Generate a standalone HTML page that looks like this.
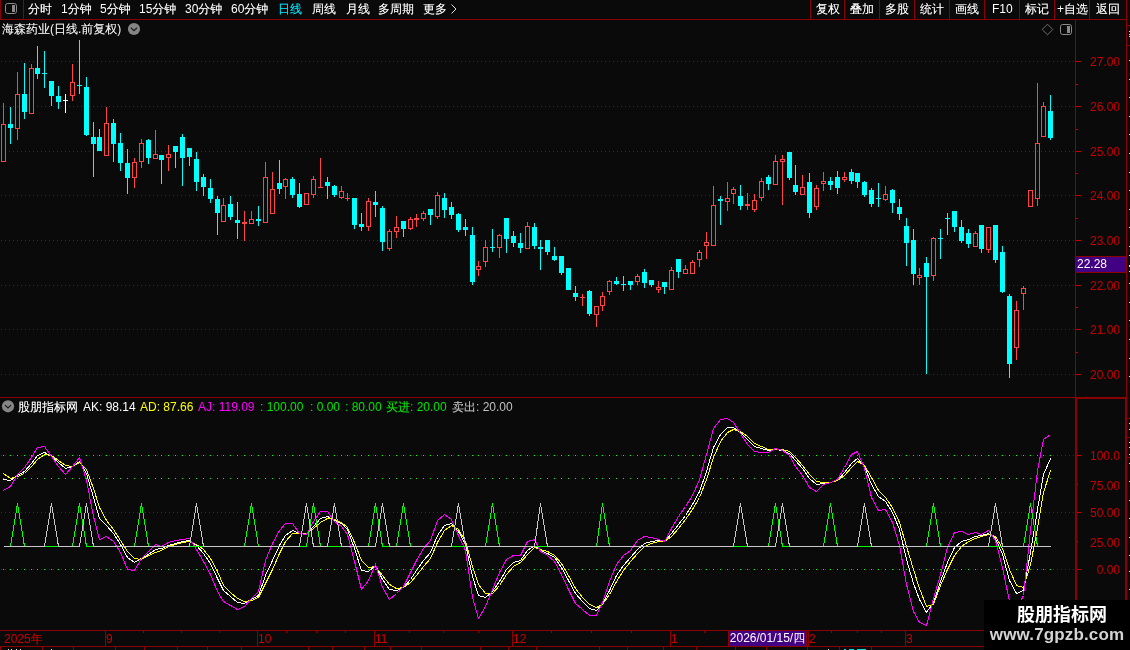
<!DOCTYPE html>
<html lang="zh-CN"><head><meta charset="utf-8"><title>海森药业 日线</title>
<style>
html,body{margin:0;padding:0;background:#0a0a0a;}
body{width:1130px;height:650px;overflow:hidden;position:relative;font-family:"Liberation Sans","WenQuanYi Zen Hei",sans-serif;font-size:12px;}
svg{position:absolute;left:0;top:0;}
.t{will-change:transform;text-shadow:0 0 0 color-mix(in srgb, currentColor 45%, transparent);position:absolute;white-space:nowrap;line-height:16px;height:16px;font-size:12px;}
.ns{text-shadow:none !important}
#wm{will-change:transform;position:absolute;left:984px;top:600px;width:146px;height:50px;background:#000;}
#wm .a{position:absolute;left:0;width:146px;text-align:center;top:3px;font-size:18px;line-height:24px;font-weight:bold;color:#fff;font-family:"Liberation Sans","Noto Sans CJK SC",sans-serif;text-indent:10px}
#wm .b{position:absolute;left:0;width:146px;text-align:center;top:25px;font-size:17px;line-height:20px;font-weight:bold;color:#d4d4d4;letter-spacing:0.14px;}
#datebox{will-change:transform;position:absolute;left:728px;top:631px;width:77px;height:15px;border-left:1px solid #8b0000;background:#420083;color:#fff;font-size:12px;line-height:15px;text-align:center;white-space:nowrap}
#pricebox{will-change:transform;position:absolute;left:1076px;top:256px;width:50px;height:15px;border-top:1px solid #8b0000;border-bottom:1px solid #8b0000;background:#420083;color:#fff;font-size:12px;line-height:15px;text-indent:1px}
</style></head><body>
<svg width="1130" height="650" viewBox="0 0 1130 650" shape-rendering="crispEdges">
<rect x="0" y="19" width="1127" height="1" fill="#8b0000"/>
<rect x="0" y="0" width="1" height="20" fill="#8b0000"/>
<rect x="23" y="0" width="1" height="20" fill="#8b0000"/>
<rect x="810" y="0" width="1" height="19" fill="#8b0000"/>
<rect x="844" y="0" width="1" height="19" fill="#8b0000"/>
<rect x="879" y="0" width="1" height="19" fill="#8b0000"/>
<rect x="914" y="0" width="1" height="19" fill="#8b0000"/>
<rect x="949" y="0" width="1" height="19" fill="#8b0000"/>
<rect x="984" y="0" width="1" height="19" fill="#8b0000"/>
<rect x="1019" y="0" width="1" height="19" fill="#8b0000"/>
<rect x="1054" y="0" width="1" height="19" fill="#8b0000"/>
<rect x="1089" y="0" width="1" height="19" fill="#8b0000"/>
<rect x="1075" y="19" width="1" height="628" fill="#8b0000"/>
<rect x="1126" y="0" width="1" height="650" fill="#8b0000"/>
<rect x="1076" y="397" width="1" height="233" fill="#8b0000"/>
<rect x="1125" y="397" width="1" height="253" fill="#8b0000"/>
<rect x="1075" y="398" width="52" height="1" fill="#8b0000"/>
<rect x="0" y="397" width="1127" height="1" fill="#8b0000"/>
<rect x="0" y="630" width="1076" height="1" fill="#8b0000"/>
<rect x="0" y="646" width="1127" height="1" fill="#8b0000"/>
<rect x="1127" y="25" width="3" height="1" fill="#8b0000"/>
<line x1="1" y1="61.5" x2="1075" y2="61.5" stroke="#a00000" stroke-width="1" stroke-dasharray="1 3"/>
<rect x="1076" y="61" width="5" height="1" fill="#c80000"/>
<line x1="1" y1="106.5" x2="1075" y2="106.5" stroke="#a00000" stroke-width="1" stroke-dasharray="1 3"/>
<rect x="1076" y="106" width="5" height="1" fill="#c80000"/>
<line x1="1" y1="151.5" x2="1075" y2="151.5" stroke="#a00000" stroke-width="1" stroke-dasharray="1 3"/>
<rect x="1076" y="151" width="5" height="1" fill="#c80000"/>
<line x1="1" y1="195.5" x2="1075" y2="195.5" stroke="#a00000" stroke-width="1" stroke-dasharray="1 3"/>
<rect x="1076" y="195" width="5" height="1" fill="#c80000"/>
<line x1="1" y1="240.5" x2="1075" y2="240.5" stroke="#a00000" stroke-width="1" stroke-dasharray="1 3"/>
<rect x="1076" y="240" width="5" height="1" fill="#c80000"/>
<line x1="1" y1="285.5" x2="1075" y2="285.5" stroke="#a00000" stroke-width="1" stroke-dasharray="1 3"/>
<rect x="1076" y="285" width="5" height="1" fill="#c80000"/>
<line x1="1" y1="329.5" x2="1075" y2="329.5" stroke="#a00000" stroke-width="1" stroke-dasharray="1 3"/>
<rect x="1076" y="329" width="5" height="1" fill="#c80000"/>
<line x1="1" y1="374.5" x2="1075" y2="374.5" stroke="#a00000" stroke-width="1" stroke-dasharray="1 3"/>
<rect x="1076" y="374" width="5" height="1" fill="#c80000"/>
<rect x="1076" y="84" width="2" height="1" fill="#c80000"/>
<rect x="1076" y="129" width="2" height="1" fill="#c80000"/>
<rect x="1076" y="173" width="2" height="1" fill="#c80000"/>
<rect x="1076" y="218" width="2" height="1" fill="#c80000"/>
<rect x="1076" y="263" width="2" height="1" fill="#c80000"/>
<rect x="1076" y="307" width="2" height="1" fill="#c80000"/>
<rect x="1076" y="352" width="2" height="1" fill="#c80000"/>
<g shape-rendering="geometricPrecision"><rect x="5.5" y="3.5" width="11" height="10" rx="2.2" fill="none" stroke="#8c8c8c" stroke-width="1"/><rect x="12" y="5" width="3" height="7" fill="#8a8a8a"/></g>
<g shape-rendering="geometricPrecision"><rect x="1060.5" y="24.5" width="11" height="10" rx="2.2" fill="none" stroke="#8c8c8c" stroke-width="1"/><rect x="1067" y="26" width="3" height="7" fill="#8a8a8a"/></g>
<g shape-rendering="geometricPrecision"><circle cx="134" cy="29" r="6.1" fill="#858585"/><polyline points="131,27.8 134,30.6 137,27.8" fill="none" stroke="#1a1a1a" stroke-width="1.2"/></g>
<g shape-rendering="geometricPrecision"><circle cx="8" cy="406.3" r="6.1" fill="#858585"/><polyline points="5,405.1 8,407.90000000000003 11,405.1" fill="none" stroke="#1a1a1a" stroke-width="1.2"/></g>
<polygon shape-rendering="geometricPrecision" points="1047.5,24.2 1052.8,29.5 1047.5,34.8 1042.2,29.5" fill="none" stroke="#787878" stroke-width="0.9"/>
<polyline shape-rendering="geometricPrecision" points="451.5,4.5 456,9 451.5,13.5" fill="none" stroke="#e0e0e0" stroke-width="1"/>
<rect x="105" y="630" width="1" height="17" fill="#8b0000"/>
<rect x="257" y="630" width="1" height="17" fill="#8b0000"/>
<rect x="374" y="630" width="1" height="17" fill="#8b0000"/>
<rect x="512" y="630" width="1" height="17" fill="#8b0000"/>
<rect x="670" y="630" width="1" height="17" fill="#8b0000"/>
<rect x="808" y="630" width="1" height="17" fill="#8b0000"/>
<rect x="905" y="630" width="1" height="17" fill="#8b0000"/>
<rect x="143" y="631" width="1" height="2" fill="#8b0000"/>
<rect x="181" y="631" width="1" height="2" fill="#8b0000"/>
<rect x="219" y="631" width="1" height="2" fill="#8b0000"/>
<rect x="286" y="631" width="1" height="2" fill="#8b0000"/>
<rect x="316" y="631" width="1" height="2" fill="#8b0000"/>
<rect x="345" y="631" width="1" height="2" fill="#8b0000"/>
<rect x="409" y="631" width="1" height="2" fill="#8b0000"/>
<rect x="443" y="631" width="1" height="2" fill="#8b0000"/>
<rect x="478" y="631" width="1" height="2" fill="#8b0000"/>
<rect x="551" y="631" width="1" height="2" fill="#8b0000"/>
<rect x="591" y="631" width="1" height="2" fill="#8b0000"/>
<rect x="631" y="631" width="1" height="2" fill="#8b0000"/>
<rect x="704" y="631" width="1" height="2" fill="#8b0000"/>
<rect x="831" y="631" width="1" height="2" fill="#8b0000"/>
<rect x="857" y="631" width="1" height="2" fill="#8b0000"/>
<rect x="881" y="631" width="1" height="2" fill="#8b0000"/>
<rect x="42" y="647" width="1" height="3" fill="#8b0000"/>
<rect x="73" y="647" width="1" height="3" fill="#8b0000"/>
<rect x="115" y="647" width="1" height="3" fill="#8b0000"/>
<rect x="144" y="647" width="1" height="3" fill="#8b0000"/>
<rect x="177" y="647" width="1" height="3" fill="#8b0000"/>
<rect x="207" y="647" width="1" height="3" fill="#8b0000"/>
<rect x="241" y="647" width="1" height="3" fill="#8b0000"/>
<rect x="308" y="647" width="1" height="3" fill="#8b0000"/>
<rect x="332" y="647" width="1" height="3" fill="#8b0000"/>
<rect x="364" y="647" width="1" height="3" fill="#8b0000"/>
<rect x="390" y="647" width="1" height="3" fill="#8b0000"/>
<rect x="421" y="647" width="1" height="3" fill="#8b0000"/>
<rect x="480" y="647" width="1" height="3" fill="#8b0000"/>
<rect x="508" y="647" width="1" height="3" fill="#8b0000"/>
<rect x="536" y="647" width="1" height="3" fill="#8b0000"/>
<rect x="599" y="647" width="1" height="3" fill="#8b0000"/>
<rect x="627" y="647" width="1" height="3" fill="#8b0000"/>
<rect x="663" y="647" width="1" height="3" fill="#8b0000"/>
<rect x="696" y="647" width="1" height="3" fill="#8b0000"/>
<rect x="735" y="647" width="1" height="3" fill="#8b0000"/>
<rect x="766" y="647" width="1" height="3" fill="#8b0000"/>
<rect x="807" y="647" width="1" height="3" fill="#8b0000"/>
<rect x="871" y="647" width="1" height="3" fill="#8b0000"/>
<rect x="806" y="630" width="1" height="17" fill="#8b0000"/>
<rect x="0" y="647" width="1" height="3" fill="#8b0000"/>
<rect x="839" y="647" width="1" height="3" fill="#8b0000"/>
<rect x="8" y="649" width="1" height="1" fill="#e0e0e0"/>
<rect x="11" y="649" width="1" height="1" fill="#e0e0e0"/>
<rect x="16" y="649" width="1" height="1" fill="#e0e0e0"/>
<rect x="20" y="649" width="1" height="1" fill="#e0e0e0"/>
<rect x="51" y="649" width="1" height="1" fill="#e0e0e0"/>
<rect x="828" y="649" width="1" height="1" fill="#e0e0e0"/>
<rect x="844" y="649" width="2" height="1" fill="#00e0e0"/>
<rect x="849" y="649" width="5" height="1" fill="#00e0e0"/>
<rect x="857" y="649" width="9" height="1" fill="#00e0e0"/>
<rect x="1129" y="31" width="1" height="1" fill="#e0e0e0"/>
<rect x="1129" y="34" width="1" height="1" fill="#e0e0e0"/>
<rect x="1129" y="36" width="1" height="1" fill="#e0e0e0"/>
<rect x="1129" y="60" width="1" height="1" fill="#e0e0e0"/>
<rect x="1129" y="79" width="1" height="1" fill="#e0e0e0"/>
<rect x="1129" y="97" width="1" height="1" fill="#e0e0e0"/>
<rect x="1129" y="116" width="1" height="1" fill="#e0e0e0"/>
<rect x="1129" y="134" width="1" height="1" fill="#e0e0e0"/>
<rect x="1129" y="153" width="1" height="1" fill="#e0e0e0"/>
<rect x="1129" y="172" width="1" height="1" fill="#e0e0e0"/>
<rect x="1129" y="190" width="1" height="1" fill="#e0e0e0"/>
<rect x="1129" y="209" width="1" height="1" fill="#e0e0e0"/>
<rect x="1129" y="227" width="1" height="1" fill="#e0e0e0"/>
<rect x="1129" y="246" width="1" height="1" fill="#e0e0e0"/>
<rect x="1129" y="265" width="1" height="1" fill="#e0e0e0"/>
<rect x="1129" y="283" width="1" height="1" fill="#e0e0e0"/>
<rect x="1129" y="302" width="1" height="1" fill="#e0e0e0"/>
<rect x="1129" y="320" width="1" height="1" fill="#e0e0e0"/>
<rect x="1129" y="339" width="1" height="1" fill="#e0e0e0"/>
<rect x="1129" y="358" width="1" height="1" fill="#e0e0e0"/>
<rect x="1129" y="376" width="1" height="1" fill="#e0e0e0"/>
<rect x="1129" y="255" width="1" height="1" fill="#e0e0e0"/>
<rect x="1129" y="266" width="1" height="1" fill="#e0e0e0"/>
<rect x="1129" y="271" width="1" height="1" fill="#e0e0e0"/>
<rect x="1129" y="423" width="1" height="1" fill="#e0e0e0"/>
<rect x="1129" y="429" width="1" height="1" fill="#e0e0e0"/>
<rect x="1129" y="442" width="1" height="1" fill="#e0e0e0"/>
<rect x="1129" y="447" width="1" height="1" fill="#e0e0e0"/>
<rect x="1129" y="454" width="1" height="1" fill="#e0e0e0"/>
<rect x="1129" y="463" width="1" height="1" fill="#e0e0e0"/>
<rect x="1129" y="481" width="1" height="1" fill="#e0e0e0"/>
<rect x="1129" y="500" width="1" height="1" fill="#e0e0e0"/>
<rect x="1129" y="518" width="1" height="1" fill="#e0e0e0"/>
<rect x="1129" y="537" width="1" height="1" fill="#e0e0e0"/>
<rect x="1129" y="555" width="1" height="1" fill="#e0e0e0"/>
<rect x="1129" y="571" width="1" height="1" fill="#e0e0e0"/>
<rect x="1129" y="589" width="1" height="1" fill="#e0e0e0"/>
<rect x="1127" y="45" width="3" height="1" fill="#8b0000"/>
<rect x="1127" y="418" width="3" height="1" fill="#8b0000"/>
<rect x="1127" y="437" width="3" height="1" fill="#8b0000"/>
<rect x="1127" y="457" width="3" height="1" fill="#8b0000"/>
<rect x="1077" y="455" width="4" height="1" fill="#c80000"/>
<rect x="1077" y="512" width="4" height="1" fill="#c80000"/>
<rect x="1077" y="569" width="4" height="1" fill="#c80000"/>
<rect x="1077" y="484" width="1" height="1" fill="#c80000"/>
<rect x="1077" y="541" width="1" height="1" fill="#c80000"/>
<!--CANDLES-->
<rect x="3" y="103" width="1" height="21" fill="#ff4444"/>
<rect x="1.5" y="124.5" width="4" height="37" fill="none" stroke="#ff4444" stroke-width="1"/>
<rect x="10" y="107" width="1" height="37" fill="#00ffff"/>
<rect x="8" y="124" width="5" height="4" fill="#00ffff"/>
<rect x="17" y="72" width="1" height="22" fill="#ff4444"/>
<rect x="17" y="129" width="1" height="11" fill="#ff4444"/>
<rect x="15.5" y="94.5" width="4" height="34" fill="none" stroke="#ff4444" stroke-width="1"/>
<rect x="24" y="63" width="1" height="56" fill="#00ffff"/>
<rect x="22" y="94" width="5" height="18" fill="#00ffff"/>
<rect x="31" y="64" width="1" height="4" fill="#ff4444"/>
<rect x="29.5" y="68.5" width="4" height="45" fill="none" stroke="#ff4444" stroke-width="1"/>
<rect x="37" y="46" width="1" height="33" fill="#00ffff"/>
<rect x="35" y="68" width="5" height="6" fill="#00ffff"/>
<rect x="44" y="51" width="1" height="37" fill="#00ffff"/>
<rect x="42" y="73" width="5" height="1" fill="#00ffff"/>
<rect x="51" y="81" width="1" height="25" fill="#00ffff"/>
<rect x="49" y="81" width="5" height="15" fill="#00ffff"/>
<rect x="58" y="86" width="1" height="23" fill="#00ffff"/>
<rect x="56" y="96" width="5" height="6" fill="#00ffff"/>
<rect x="65" y="94" width="1" height="19" fill="#ffffff"/>
<rect x="63" y="100" width="5" height="1" fill="#ffffff"/>
<rect x="72" y="64" width="1" height="18" fill="#ff4444"/>
<rect x="72" y="96" width="1" height="5" fill="#ff4444"/>
<rect x="70.5" y="82.5" width="4" height="13" fill="none" stroke="#ff4444" stroke-width="1"/>
<rect x="79" y="40" width="1" height="54" fill="#00ffff"/>
<rect x="77" y="85" width="5" height="1" fill="#00ffff"/>
<rect x="86" y="77" width="1" height="59" fill="#00ffff"/>
<rect x="84" y="87" width="5" height="48" fill="#00ffff"/>
<rect x="93" y="122" width="1" height="55" fill="#00ffff"/>
<rect x="91" y="137" width="5" height="7" fill="#00ffff"/>
<rect x="99" y="129" width="1" height="22" fill="#00ffff"/>
<rect x="97" y="137" width="5" height="14" fill="#00ffff"/>
<rect x="106" y="107" width="1" height="16" fill="#ff4444"/>
<rect x="104.5" y="123.5" width="4" height="32" fill="none" stroke="#ff4444" stroke-width="1"/>
<rect x="113" y="119" width="1" height="43" fill="#00ffff"/>
<rect x="111" y="123" width="5" height="21" fill="#00ffff"/>
<rect x="120" y="133" width="1" height="38" fill="#00ffff"/>
<rect x="118" y="143" width="5" height="20" fill="#00ffff"/>
<rect x="127" y="149" width="1" height="45" fill="#00ffff"/>
<rect x="125" y="163" width="5" height="15" fill="#00ffff"/>
<rect x="134" y="158" width="1" height="4" fill="#ff4444"/>
<rect x="134" y="178" width="1" height="10" fill="#ff4444"/>
<rect x="132.5" y="162.5" width="4" height="15" fill="none" stroke="#ff4444" stroke-width="1"/>
<rect x="141" y="139" width="1" height="4" fill="#ff4444"/>
<rect x="141" y="162" width="1" height="6" fill="#ff4444"/>
<rect x="139.5" y="143.5" width="4" height="18" fill="none" stroke="#ff4444" stroke-width="1"/>
<rect x="148" y="139" width="1" height="25" fill="#00ffff"/>
<rect x="146" y="140" width="5" height="18" fill="#00ffff"/>
<rect x="155" y="130" width="1" height="24" fill="#ff4444"/>
<rect x="153.5" y="154.5" width="4" height="4" fill="none" stroke="#ff4444" stroke-width="1"/>
<rect x="161" y="155" width="1" height="29" fill="#00ffff"/>
<rect x="159" y="155" width="5" height="5" fill="#00ffff"/>
<rect x="168" y="145" width="1" height="9" fill="#ff4444"/>
<rect x="168" y="158" width="1" height="13" fill="#ff4444"/>
<rect x="166.5" y="154.5" width="4" height="3" fill="none" stroke="#ff4444" stroke-width="1"/>
<rect x="175" y="146" width="1" height="22" fill="#00ffff"/>
<rect x="173" y="146" width="5" height="6" fill="#00ffff"/>
<rect x="182" y="134" width="1" height="52" fill="#00ffff"/>
<rect x="180" y="137" width="5" height="21" fill="#00ffff"/>
<rect x="189" y="148" width="1" height="18" fill="#00ffff"/>
<rect x="187" y="148" width="5" height="9" fill="#00ffff"/>
<rect x="196" y="152" width="1" height="39" fill="#00ffff"/>
<rect x="194" y="159" width="5" height="23" fill="#00ffff"/>
<rect x="203" y="174" width="1" height="22" fill="#00ffff"/>
<rect x="201" y="177" width="5" height="10" fill="#00ffff"/>
<rect x="210" y="179" width="1" height="24" fill="#00ffff"/>
<rect x="208" y="188" width="5" height="11" fill="#00ffff"/>
<rect x="217" y="196" width="1" height="39" fill="#00ffff"/>
<rect x="215" y="199" width="5" height="14" fill="#00ffff"/>
<rect x="223" y="198" width="1" height="7" fill="#ff4444"/>
<rect x="221.5" y="205.5" width="4" height="16" fill="none" stroke="#ff4444" stroke-width="1"/>
<rect x="230" y="196" width="1" height="24" fill="#00ffff"/>
<rect x="228" y="204" width="5" height="13" fill="#00ffff"/>
<rect x="237" y="202" width="1" height="37" fill="#00ffff"/>
<rect x="235" y="220" width="5" height="3" fill="#00ffff"/>
<rect x="244" y="211" width="1" height="30" fill="#ff4444"/>
<rect x="242" y="222" width="5" height="2" fill="#ff4444"/>
<rect x="251" y="211" width="1" height="8" fill="#ff4444"/>
<rect x="249.5" y="219.5" width="4" height="4" fill="none" stroke="#ff4444" stroke-width="1"/>
<rect x="258" y="206" width="1" height="20" fill="#00ffff"/>
<rect x="256" y="219" width="5" height="2" fill="#00ffff"/>
<rect x="265" y="162" width="1" height="15" fill="#ff4444"/>
<rect x="263.5" y="177.5" width="4" height="45" fill="none" stroke="#ff4444" stroke-width="1"/>
<rect x="272" y="172" width="1" height="17" fill="#ff4444"/>
<rect x="270.5" y="189.5" width="4" height="24" fill="none" stroke="#ff4444" stroke-width="1"/>
<rect x="279" y="160" width="1" height="34" fill="#00ffff"/>
<rect x="277" y="183" width="5" height="6" fill="#00ffff"/>
<rect x="285" y="178" width="1" height="1" fill="#ff4444"/>
<rect x="285" y="187" width="1" height="12" fill="#ff4444"/>
<rect x="283.5" y="179.5" width="4" height="7" fill="none" stroke="#ff4444" stroke-width="1"/>
<rect x="292" y="177" width="1" height="21" fill="#00ffff"/>
<rect x="290" y="179" width="5" height="16" fill="#00ffff"/>
<rect x="299" y="183" width="1" height="25" fill="#00ffff"/>
<rect x="297" y="194" width="5" height="13" fill="#00ffff"/>
<rect x="304.5" y="193.5" width="4" height="11" fill="none" stroke="#ff4444" stroke-width="1"/>
<rect x="313" y="176" width="1" height="3" fill="#ff4444"/>
<rect x="313" y="195" width="1" height="3" fill="#ff4444"/>
<rect x="311.5" y="179.5" width="4" height="15" fill="none" stroke="#ff4444" stroke-width="1"/>
<rect x="320" y="158" width="1" height="30" fill="#ff4444"/>
<rect x="318" y="187" width="5" height="1" fill="#ff4444"/>
<rect x="327" y="177" width="1" height="22" fill="#00ffff"/>
<rect x="325" y="182" width="5" height="4" fill="#00ffff"/>
<rect x="334" y="185" width="1" height="12" fill="#00ffff"/>
<rect x="332" y="186" width="5" height="9" fill="#00ffff"/>
<rect x="341" y="186" width="1" height="5" fill="#ff4444"/>
<rect x="341" y="198" width="1" height="1" fill="#ff4444"/>
<rect x="339.5" y="191.5" width="4" height="6" fill="none" stroke="#ff4444" stroke-width="1"/>
<rect x="347" y="193" width="1" height="8" fill="#ff4444"/>
<rect x="345" y="198" width="5" height="1" fill="#ff4444"/>
<rect x="354" y="198" width="1" height="31" fill="#00ffff"/>
<rect x="352" y="198" width="5" height="27" fill="#00ffff"/>
<rect x="361" y="213" width="1" height="18" fill="#00ffff"/>
<rect x="359" y="224" width="5" height="3" fill="#00ffff"/>
<rect x="368" y="198" width="1" height="3" fill="#ff4444"/>
<rect x="368" y="227" width="1" height="4" fill="#ff4444"/>
<rect x="366.5" y="201.5" width="4" height="25" fill="none" stroke="#ff4444" stroke-width="1"/>
<rect x="375" y="191" width="1" height="26" fill="#00ffff"/>
<rect x="373" y="202" width="5" height="3" fill="#00ffff"/>
<rect x="382" y="206" width="1" height="45" fill="#00ffff"/>
<rect x="380" y="208" width="5" height="34" fill="#00ffff"/>
<rect x="389" y="229" width="1" height="2" fill="#ff4444"/>
<rect x="389" y="249" width="1" height="2" fill="#ff4444"/>
<rect x="387.5" y="231.5" width="4" height="17" fill="none" stroke="#ff4444" stroke-width="1"/>
<rect x="396" y="216" width="1" height="11" fill="#ff4444"/>
<rect x="396" y="232" width="1" height="6" fill="#ff4444"/>
<rect x="394.5" y="227.5" width="4" height="4" fill="none" stroke="#ff4444" stroke-width="1"/>
<rect x="403" y="221" width="1" height="16" fill="#00ffff"/>
<rect x="401" y="221" width="5" height="8" fill="#00ffff"/>
<rect x="410" y="217" width="1" height="2" fill="#ff4444"/>
<rect x="410" y="229" width="1" height="1" fill="#ff4444"/>
<rect x="408.5" y="219.5" width="4" height="9" fill="none" stroke="#ff4444" stroke-width="1"/>
<rect x="416" y="214" width="1" height="13" fill="#ff4444"/>
<rect x="414" y="218" width="5" height="2" fill="#ff4444"/>
<rect x="423" y="211" width="1" height="2" fill="#ff4444"/>
<rect x="423" y="219" width="1" height="2" fill="#ff4444"/>
<rect x="421.5" y="213.5" width="4" height="5" fill="none" stroke="#ff4444" stroke-width="1"/>
<rect x="430" y="209" width="1" height="16" fill="#00ffff"/>
<rect x="428" y="209" width="5" height="6" fill="#00ffff"/>
<rect x="437" y="192" width="1" height="3" fill="#ff4444"/>
<rect x="437" y="217" width="1" height="2" fill="#ff4444"/>
<rect x="435.5" y="195.5" width="4" height="21" fill="none" stroke="#ff4444" stroke-width="1"/>
<rect x="444" y="193" width="1" height="25" fill="#00ffff"/>
<rect x="442" y="198" width="5" height="12" fill="#00ffff"/>
<rect x="451" y="202" width="1" height="17" fill="#00ffff"/>
<rect x="449" y="207" width="5" height="8" fill="#00ffff"/>
<rect x="458" y="213" width="1" height="19" fill="#00ffff"/>
<rect x="456" y="214" width="5" height="16" fill="#00ffff"/>
<rect x="465" y="219" width="1" height="17" fill="#00ffff"/>
<rect x="463" y="227" width="5" height="3" fill="#00ffff"/>
<rect x="472" y="227" width="1" height="58" fill="#00ffff"/>
<rect x="470" y="235" width="5" height="47" fill="#00ffff"/>
<rect x="478" y="261" width="1" height="5" fill="#ff4444"/>
<rect x="478" y="270" width="1" height="6" fill="#ff4444"/>
<rect x="476.5" y="266.5" width="4" height="3" fill="none" stroke="#ff4444" stroke-width="1"/>
<rect x="485" y="240" width="1" height="7" fill="#ff4444"/>
<rect x="485" y="262" width="1" height="5" fill="#ff4444"/>
<rect x="483.5" y="247.5" width="4" height="14" fill="none" stroke="#ff4444" stroke-width="1"/>
<rect x="492" y="229" width="1" height="23" fill="#00ffff"/>
<rect x="490" y="247" width="5" height="1" fill="#00ffff"/>
<rect x="499" y="234" width="1" height="1" fill="#ff4444"/>
<rect x="499" y="248" width="1" height="10" fill="#ff4444"/>
<rect x="497.5" y="235.5" width="4" height="12" fill="none" stroke="#ff4444" stroke-width="1"/>
<rect x="506" y="218" width="1" height="35" fill="#00ffff"/>
<rect x="504" y="218" width="5" height="21" fill="#00ffff"/>
<rect x="513" y="231" width="1" height="16" fill="#00ffff"/>
<rect x="511" y="236" width="5" height="7" fill="#00ffff"/>
<rect x="520" y="233" width="1" height="20" fill="#00ffff"/>
<rect x="518" y="243" width="5" height="5" fill="#00ffff"/>
<rect x="527" y="222" width="1" height="4" fill="#ff4444"/>
<rect x="525.5" y="226.5" width="4" height="22" fill="none" stroke="#ff4444" stroke-width="1"/>
<rect x="534" y="223" width="1" height="26" fill="#00ffff"/>
<rect x="532" y="227" width="5" height="19" fill="#00ffff"/>
<rect x="540" y="240" width="1" height="30" fill="#00ffff"/>
<rect x="538" y="247" width="5" height="2" fill="#00ffff"/>
<rect x="547" y="240" width="1" height="15" fill="#00ffff"/>
<rect x="545" y="240" width="5" height="12" fill="#00ffff"/>
<rect x="554" y="247" width="1" height="14" fill="#00ffff"/>
<rect x="552" y="256" width="5" height="4" fill="#00ffff"/>
<rect x="561" y="256" width="1" height="19" fill="#00ffff"/>
<rect x="559" y="256" width="5" height="17" fill="#00ffff"/>
<rect x="568" y="268" width="1" height="22" fill="#00ffff"/>
<rect x="566" y="268" width="5" height="22" fill="#00ffff"/>
<rect x="575" y="286" width="1" height="15" fill="#00ffff"/>
<rect x="573" y="293" width="5" height="4" fill="#00ffff"/>
<rect x="582" y="294" width="1" height="12" fill="#ff4444"/>
<rect x="580" y="297" width="5" height="1" fill="#ff4444"/>
<rect x="589" y="290" width="1" height="26" fill="#00ffff"/>
<rect x="587" y="291" width="5" height="23" fill="#00ffff"/>
<rect x="596" y="315" width="1" height="12" fill="#ff4444"/>
<rect x="594.5" y="306.5" width="4" height="8" fill="none" stroke="#ff4444" stroke-width="1"/>
<rect x="602" y="292" width="1" height="4" fill="#ff4444"/>
<rect x="602" y="306" width="1" height="5" fill="#ff4444"/>
<rect x="600.5" y="296.5" width="4" height="9" fill="none" stroke="#ff4444" stroke-width="1"/>
<rect x="609" y="280" width="1" height="1" fill="#ff4444"/>
<rect x="609" y="292" width="1" height="3" fill="#ff4444"/>
<rect x="607.5" y="281.5" width="4" height="10" fill="none" stroke="#ff4444" stroke-width="1"/>
<rect x="616" y="277" width="1" height="8" fill="#00ffff"/>
<rect x="614" y="281" width="5" height="3" fill="#00ffff"/>
<rect x="623" y="276" width="1" height="15" fill="#00ffff"/>
<rect x="621" y="284" width="5" height="1" fill="#00ffff"/>
<rect x="630" y="281" width="1" height="9" fill="#00ffff"/>
<rect x="628" y="281" width="5" height="4" fill="#00ffff"/>
<rect x="637" y="274" width="1" height="2" fill="#ff4444"/>
<rect x="637" y="282" width="1" height="3" fill="#ff4444"/>
<rect x="635.5" y="276.5" width="4" height="5" fill="none" stroke="#ff4444" stroke-width="1"/>
<rect x="644" y="269" width="1" height="19" fill="#00ffff"/>
<rect x="642" y="272" width="5" height="11" fill="#00ffff"/>
<rect x="651" y="280" width="1" height="7" fill="#00ffff"/>
<rect x="649" y="280" width="5" height="5" fill="#00ffff"/>
<rect x="658" y="281" width="1" height="6" fill="#ff4444"/>
<rect x="658" y="290" width="1" height="3" fill="#ff4444"/>
<rect x="656.5" y="287.5" width="4" height="2" fill="none" stroke="#ff4444" stroke-width="1"/>
<rect x="664" y="282" width="1" height="12" fill="#00ffff"/>
<rect x="662" y="282" width="5" height="5" fill="#00ffff"/>
<rect x="671" y="267" width="1" height="3" fill="#ff4444"/>
<rect x="669.5" y="270.5" width="4" height="19" fill="none" stroke="#ff4444" stroke-width="1"/>
<rect x="678" y="259" width="1" height="19" fill="#00ffff"/>
<rect x="676" y="259" width="5" height="13" fill="#00ffff"/>
<rect x="685" y="265" width="1" height="4" fill="#ff4444"/>
<rect x="683.5" y="269.5" width="4" height="4" fill="none" stroke="#ff4444" stroke-width="1"/>
<rect x="692" y="260" width="1" height="2" fill="#ff4444"/>
<rect x="690.5" y="262.5" width="4" height="11" fill="none" stroke="#ff4444" stroke-width="1"/>
<rect x="699" y="250" width="1" height="2" fill="#ff4444"/>
<rect x="699" y="260" width="1" height="7" fill="#ff4444"/>
<rect x="697.5" y="252.5" width="4" height="7" fill="none" stroke="#ff4444" stroke-width="1"/>
<rect x="706" y="232" width="1" height="10" fill="#ff4444"/>
<rect x="706" y="246" width="1" height="13" fill="#ff4444"/>
<rect x="704.5" y="242.5" width="4" height="3" fill="none" stroke="#ff4444" stroke-width="1"/>
<rect x="713" y="186" width="1" height="19" fill="#ff4444"/>
<rect x="711.5" y="205.5" width="4" height="40" fill="none" stroke="#ff4444" stroke-width="1"/>
<rect x="720" y="196" width="1" height="29" fill="#00ffff"/>
<rect x="718" y="199" width="5" height="2" fill="#00ffff"/>
<rect x="727" y="182" width="1" height="16" fill="#ff4444"/>
<rect x="727" y="202" width="1" height="9" fill="#ff4444"/>
<rect x="725.5" y="198.5" width="4" height="3" fill="none" stroke="#ff4444" stroke-width="1"/>
<rect x="733" y="187" width="1" height="2" fill="#ff4444"/>
<rect x="733" y="194" width="1" height="10" fill="#ff4444"/>
<rect x="731.5" y="189.5" width="4" height="4" fill="none" stroke="#ff4444" stroke-width="1"/>
<rect x="740" y="185" width="1" height="25" fill="#00ffff"/>
<rect x="738" y="196" width="5" height="10" fill="#00ffff"/>
<rect x="747" y="193" width="1" height="17" fill="#ff4444"/>
<rect x="745" y="204" width="5" height="2" fill="#ff4444"/>
<rect x="754" y="194" width="1" height="6" fill="#ff4444"/>
<rect x="754" y="210" width="1" height="2" fill="#ff4444"/>
<rect x="752.5" y="200.5" width="4" height="9" fill="none" stroke="#ff4444" stroke-width="1"/>
<rect x="761" y="178" width="1" height="3" fill="#ff4444"/>
<rect x="761" y="198" width="1" height="3" fill="#ff4444"/>
<rect x="759.5" y="181.5" width="4" height="16" fill="none" stroke="#ff4444" stroke-width="1"/>
<rect x="768" y="175" width="1" height="15" fill="#00ffff"/>
<rect x="766" y="177" width="5" height="7" fill="#00ffff"/>
<rect x="775" y="155" width="1" height="6" fill="#ff4444"/>
<rect x="773.5" y="161.5" width="4" height="23" fill="none" stroke="#ff4444" stroke-width="1"/>
<rect x="782" y="155" width="1" height="4" fill="#ff4444"/>
<rect x="782" y="162" width="1" height="43" fill="#ff4444"/>
<rect x="780.5" y="159.5" width="4" height="2" fill="none" stroke="#ff4444" stroke-width="1"/>
<rect x="789" y="152" width="1" height="28" fill="#00ffff"/>
<rect x="787" y="152" width="5" height="26" fill="#00ffff"/>
<rect x="795" y="165" width="1" height="30" fill="#00ffff"/>
<rect x="793" y="185" width="5" height="7" fill="#00ffff"/>
<rect x="802" y="175" width="1" height="12" fill="#ff4444"/>
<rect x="800.5" y="187.5" width="4" height="7" fill="none" stroke="#ff4444" stroke-width="1"/>
<rect x="809" y="173" width="1" height="45" fill="#00ffff"/>
<rect x="807" y="182" width="5" height="31" fill="#00ffff"/>
<rect x="816" y="185" width="1" height="3" fill="#ff4444"/>
<rect x="816" y="207" width="1" height="3" fill="#ff4444"/>
<rect x="814.5" y="188.5" width="4" height="18" fill="none" stroke="#ff4444" stroke-width="1"/>
<rect x="823" y="172" width="1" height="9" fill="#ff4444"/>
<rect x="823" y="184" width="1" height="7" fill="#ff4444"/>
<rect x="821.5" y="181.5" width="4" height="2" fill="none" stroke="#ff4444" stroke-width="1"/>
<rect x="830" y="177" width="1" height="13" fill="#00ffff"/>
<rect x="828" y="181" width="5" height="4" fill="#00ffff"/>
<rect x="837" y="171" width="1" height="23" fill="#00ffff"/>
<rect x="835" y="177" width="5" height="11" fill="#00ffff"/>
<rect x="844" y="172" width="1" height="5" fill="#ff4444"/>
<rect x="844" y="180" width="1" height="2" fill="#ff4444"/>
<rect x="842.5" y="177.5" width="4" height="2" fill="none" stroke="#ff4444" stroke-width="1"/>
<rect x="851" y="169" width="1" height="15" fill="#00ffff"/>
<rect x="849" y="172" width="5" height="9" fill="#00ffff"/>
<rect x="857" y="173" width="1" height="15" fill="#00ffff"/>
<rect x="855" y="173" width="5" height="9" fill="#00ffff"/>
<rect x="864" y="181" width="1" height="16" fill="#00ffff"/>
<rect x="862" y="182" width="5" height="13" fill="#00ffff"/>
<rect x="871" y="188" width="1" height="19" fill="#00ffff"/>
<rect x="869" y="190" width="5" height="14" fill="#00ffff"/>
<rect x="878" y="183" width="1" height="24" fill="#00ffff"/>
<rect x="876" y="198" width="5" height="1" fill="#00ffff"/>
<rect x="885" y="186" width="1" height="8" fill="#ff4444"/>
<rect x="885" y="200" width="1" height="1" fill="#ff4444"/>
<rect x="883.5" y="194.5" width="4" height="5" fill="none" stroke="#ff4444" stroke-width="1"/>
<rect x="892" y="189" width="1" height="24" fill="#00ffff"/>
<rect x="890" y="190" width="5" height="13" fill="#00ffff"/>
<rect x="899" y="199" width="1" height="21" fill="#00ffff"/>
<rect x="897" y="207" width="5" height="7" fill="#00ffff"/>
<rect x="906" y="218" width="1" height="48" fill="#00ffff"/>
<rect x="904" y="226" width="5" height="17" fill="#00ffff"/>
<rect x="913" y="229" width="1" height="56" fill="#00ffff"/>
<rect x="911" y="240" width="5" height="34" fill="#00ffff"/>
<rect x="919" y="268" width="1" height="7" fill="#ff4444"/>
<rect x="919" y="278" width="1" height="7" fill="#ff4444"/>
<rect x="917.5" y="275.5" width="4" height="2" fill="none" stroke="#ff4444" stroke-width="1"/>
<rect x="926" y="257" width="1" height="117" fill="#00ffff"/>
<rect x="924" y="263" width="5" height="14" fill="#00ffff"/>
<rect x="933" y="237" width="1" height="1" fill="#ff4444"/>
<rect x="933" y="276" width="1" height="5" fill="#ff4444"/>
<rect x="931.5" y="238.5" width="4" height="37" fill="none" stroke="#ff4444" stroke-width="1"/>
<rect x="940" y="229" width="1" height="30" fill="#00ffff"/>
<rect x="938" y="238" width="5" height="1" fill="#00ffff"/>
<rect x="947" y="213" width="1" height="22" fill="#00ffff"/>
<rect x="945" y="218" width="5" height="1" fill="#00ffff"/>
<rect x="954" y="211" width="1" height="21" fill="#00ffff"/>
<rect x="952" y="211" width="5" height="16" fill="#00ffff"/>
<rect x="961" y="220" width="1" height="23" fill="#00ffff"/>
<rect x="959" y="227" width="5" height="14" fill="#00ffff"/>
<rect x="968" y="229" width="1" height="19" fill="#00ffff"/>
<rect x="966" y="233" width="5" height="11" fill="#00ffff"/>
<rect x="975" y="231" width="1" height="2" fill="#ff4444"/>
<rect x="973.5" y="233.5" width="4" height="13" fill="none" stroke="#ff4444" stroke-width="1"/>
<rect x="981" y="225" width="1" height="28" fill="#00ffff"/>
<rect x="979" y="225" width="5" height="24" fill="#00ffff"/>
<rect x="988" y="250" width="1" height="3" fill="#ff4444"/>
<rect x="986.5" y="227.5" width="4" height="22" fill="none" stroke="#ff4444" stroke-width="1"/>
<rect x="995" y="225" width="1" height="38" fill="#00ffff"/>
<rect x="993" y="225" width="5" height="35" fill="#00ffff"/>
<rect x="1002" y="246" width="1" height="47" fill="#00ffff"/>
<rect x="1000" y="252" width="5" height="40" fill="#00ffff"/>
<rect x="1009" y="294" width="1" height="84" fill="#00ffff"/>
<rect x="1007" y="296" width="5" height="68" fill="#00ffff"/>
<rect x="1016" y="301" width="1" height="9" fill="#ff4444"/>
<rect x="1016" y="348" width="1" height="12" fill="#ff4444"/>
<rect x="1014.5" y="310.5" width="4" height="37" fill="none" stroke="#ff4444" stroke-width="1"/>
<rect x="1023" y="286" width="1" height="2" fill="#ff4444"/>
<rect x="1023" y="294" width="1" height="16" fill="#ff4444"/>
<rect x="1021.5" y="288.5" width="4" height="5" fill="none" stroke="#ff4444" stroke-width="1"/>
<rect x="1028.5" y="190.5" width="4" height="16" fill="none" stroke="#ff4444" stroke-width="1"/>
<rect x="1037" y="83" width="1" height="60" fill="#ff4444"/>
<rect x="1037" y="199" width="1" height="7" fill="#ff4444"/>
<rect x="1035.5" y="143.5" width="4" height="55" fill="none" stroke="#ff4444" stroke-width="1"/>
<rect x="1043" y="102" width="1" height="4" fill="#ff4444"/>
<rect x="1041.5" y="106.5" width="4" height="30" fill="none" stroke="#ff4444" stroke-width="1"/>
<rect x="1050" y="95" width="1" height="45" fill="#00ffff"/>
<rect x="1048" y="111" width="5" height="27" fill="#00ffff"/>
<!--IND-->
<line x1="1" y1="455.5" x2="1075" y2="455.5" stroke="#a00000" stroke-width="1" stroke-dasharray="1 3"/>
<line x1="1" y1="512.5" x2="1075" y2="512.5" stroke="#a00000" stroke-width="1" stroke-dasharray="1 3"/>
<line x1="1" y1="569.5" x2="1075" y2="569.5" stroke="#a00000" stroke-width="1" stroke-dasharray="1 3"/>
<rect x="3" y="455" width="1" height="1" fill="#00ff00"/><rect x="10" y="455" width="1" height="1" fill="#00ff00"/><rect x="17" y="455" width="1" height="1" fill="#00ff00"/><rect x="24" y="455" width="1" height="1" fill="#00ff00"/><rect x="31" y="455" width="1" height="1" fill="#00ff00"/><rect x="37" y="455" width="1" height="1" fill="#00ff00"/><rect x="44" y="455" width="1" height="1" fill="#00ff00"/><rect x="51" y="455" width="1" height="1" fill="#00ff00"/><rect x="58" y="455" width="1" height="1" fill="#00ff00"/><rect x="65" y="455" width="1" height="1" fill="#00ff00"/><rect x="72" y="455" width="1" height="1" fill="#00ff00"/><rect x="79" y="455" width="1" height="1" fill="#00ff00"/><rect x="86" y="455" width="1" height="1" fill="#00ff00"/><rect x="93" y="455" width="1" height="1" fill="#00ff00"/><rect x="99" y="455" width="1" height="1" fill="#00ff00"/><rect x="106" y="455" width="1" height="1" fill="#00ff00"/><rect x="113" y="455" width="1" height="1" fill="#00ff00"/><rect x="120" y="455" width="1" height="1" fill="#00ff00"/><rect x="127" y="455" width="1" height="1" fill="#00ff00"/><rect x="134" y="455" width="1" height="1" fill="#00ff00"/><rect x="141" y="455" width="1" height="1" fill="#00ff00"/><rect x="148" y="455" width="1" height="1" fill="#00ff00"/><rect x="155" y="455" width="1" height="1" fill="#00ff00"/><rect x="161" y="455" width="1" height="1" fill="#00ff00"/><rect x="168" y="455" width="1" height="1" fill="#00ff00"/><rect x="175" y="455" width="1" height="1" fill="#00ff00"/><rect x="182" y="455" width="1" height="1" fill="#00ff00"/><rect x="189" y="455" width="1" height="1" fill="#00ff00"/><rect x="196" y="455" width="1" height="1" fill="#00ff00"/><rect x="203" y="455" width="1" height="1" fill="#00ff00"/><rect x="210" y="455" width="1" height="1" fill="#00ff00"/><rect x="217" y="455" width="1" height="1" fill="#00ff00"/><rect x="223" y="455" width="1" height="1" fill="#00ff00"/><rect x="230" y="455" width="1" height="1" fill="#00ff00"/><rect x="237" y="455" width="1" height="1" fill="#00ff00"/><rect x="244" y="455" width="1" height="1" fill="#00ff00"/><rect x="251" y="455" width="1" height="1" fill="#00ff00"/><rect x="258" y="455" width="1" height="1" fill="#00ff00"/><rect x="265" y="455" width="1" height="1" fill="#00ff00"/><rect x="272" y="455" width="1" height="1" fill="#00ff00"/><rect x="279" y="455" width="1" height="1" fill="#00ff00"/><rect x="285" y="455" width="1" height="1" fill="#00ff00"/><rect x="292" y="455" width="1" height="1" fill="#00ff00"/><rect x="299" y="455" width="1" height="1" fill="#00ff00"/><rect x="306" y="455" width="1" height="1" fill="#00ff00"/><rect x="313" y="455" width="1" height="1" fill="#00ff00"/><rect x="320" y="455" width="1" height="1" fill="#00ff00"/><rect x="327" y="455" width="1" height="1" fill="#00ff00"/><rect x="334" y="455" width="1" height="1" fill="#00ff00"/><rect x="341" y="455" width="1" height="1" fill="#00ff00"/><rect x="347" y="455" width="1" height="1" fill="#00ff00"/><rect x="354" y="455" width="1" height="1" fill="#00ff00"/><rect x="361" y="455" width="1" height="1" fill="#00ff00"/><rect x="368" y="455" width="1" height="1" fill="#00ff00"/><rect x="375" y="455" width="1" height="1" fill="#00ff00"/><rect x="382" y="455" width="1" height="1" fill="#00ff00"/><rect x="389" y="455" width="1" height="1" fill="#00ff00"/><rect x="396" y="455" width="1" height="1" fill="#00ff00"/><rect x="403" y="455" width="1" height="1" fill="#00ff00"/><rect x="410" y="455" width="1" height="1" fill="#00ff00"/><rect x="416" y="455" width="1" height="1" fill="#00ff00"/><rect x="423" y="455" width="1" height="1" fill="#00ff00"/><rect x="430" y="455" width="1" height="1" fill="#00ff00"/><rect x="437" y="455" width="1" height="1" fill="#00ff00"/><rect x="444" y="455" width="1" height="1" fill="#00ff00"/><rect x="451" y="455" width="1" height="1" fill="#00ff00"/><rect x="458" y="455" width="1" height="1" fill="#00ff00"/><rect x="465" y="455" width="1" height="1" fill="#00ff00"/><rect x="472" y="455" width="1" height="1" fill="#00ff00"/><rect x="478" y="455" width="1" height="1" fill="#00ff00"/><rect x="485" y="455" width="1" height="1" fill="#00ff00"/><rect x="492" y="455" width="1" height="1" fill="#00ff00"/><rect x="499" y="455" width="1" height="1" fill="#00ff00"/><rect x="506" y="455" width="1" height="1" fill="#00ff00"/><rect x="513" y="455" width="1" height="1" fill="#00ff00"/><rect x="520" y="455" width="1" height="1" fill="#00ff00"/><rect x="527" y="455" width="1" height="1" fill="#00ff00"/><rect x="534" y="455" width="1" height="1" fill="#00ff00"/><rect x="540" y="455" width="1" height="1" fill="#00ff00"/><rect x="547" y="455" width="1" height="1" fill="#00ff00"/><rect x="554" y="455" width="1" height="1" fill="#00ff00"/><rect x="561" y="455" width="1" height="1" fill="#00ff00"/><rect x="568" y="455" width="1" height="1" fill="#00ff00"/><rect x="575" y="455" width="1" height="1" fill="#00ff00"/><rect x="582" y="455" width="1" height="1" fill="#00ff00"/><rect x="589" y="455" width="1" height="1" fill="#00ff00"/><rect x="596" y="455" width="1" height="1" fill="#00ff00"/><rect x="602" y="455" width="1" height="1" fill="#00ff00"/><rect x="609" y="455" width="1" height="1" fill="#00ff00"/><rect x="616" y="455" width="1" height="1" fill="#00ff00"/><rect x="623" y="455" width="1" height="1" fill="#00ff00"/><rect x="630" y="455" width="1" height="1" fill="#00ff00"/><rect x="637" y="455" width="1" height="1" fill="#00ff00"/><rect x="644" y="455" width="1" height="1" fill="#00ff00"/><rect x="651" y="455" width="1" height="1" fill="#00ff00"/><rect x="658" y="455" width="1" height="1" fill="#00ff00"/><rect x="664" y="455" width="1" height="1" fill="#00ff00"/><rect x="671" y="455" width="1" height="1" fill="#00ff00"/><rect x="678" y="455" width="1" height="1" fill="#00ff00"/><rect x="685" y="455" width="1" height="1" fill="#00ff00"/><rect x="692" y="455" width="1" height="1" fill="#00ff00"/><rect x="699" y="455" width="1" height="1" fill="#00ff00"/><rect x="706" y="455" width="1" height="1" fill="#00ff00"/><rect x="713" y="455" width="1" height="1" fill="#00ff00"/><rect x="720" y="455" width="1" height="1" fill="#00ff00"/><rect x="727" y="455" width="1" height="1" fill="#00ff00"/><rect x="733" y="455" width="1" height="1" fill="#00ff00"/><rect x="740" y="455" width="1" height="1" fill="#00ff00"/><rect x="747" y="455" width="1" height="1" fill="#00ff00"/><rect x="754" y="455" width="1" height="1" fill="#00ff00"/><rect x="761" y="455" width="1" height="1" fill="#00ff00"/><rect x="768" y="455" width="1" height="1" fill="#00ff00"/><rect x="775" y="455" width="1" height="1" fill="#00ff00"/><rect x="782" y="455" width="1" height="1" fill="#00ff00"/><rect x="789" y="455" width="1" height="1" fill="#00ff00"/><rect x="795" y="455" width="1" height="1" fill="#00ff00"/><rect x="802" y="455" width="1" height="1" fill="#00ff00"/><rect x="809" y="455" width="1" height="1" fill="#00ff00"/><rect x="816" y="455" width="1" height="1" fill="#00ff00"/><rect x="823" y="455" width="1" height="1" fill="#00ff00"/><rect x="830" y="455" width="1" height="1" fill="#00ff00"/><rect x="837" y="455" width="1" height="1" fill="#00ff00"/><rect x="844" y="455" width="1" height="1" fill="#00ff00"/><rect x="851" y="455" width="1" height="1" fill="#00ff00"/><rect x="857" y="455" width="1" height="1" fill="#00ff00"/><rect x="864" y="455" width="1" height="1" fill="#00ff00"/><rect x="871" y="455" width="1" height="1" fill="#00ff00"/><rect x="878" y="455" width="1" height="1" fill="#00ff00"/><rect x="885" y="455" width="1" height="1" fill="#00ff00"/><rect x="892" y="455" width="1" height="1" fill="#00ff00"/><rect x="899" y="455" width="1" height="1" fill="#00ff00"/><rect x="906" y="455" width="1" height="1" fill="#00ff00"/><rect x="913" y="455" width="1" height="1" fill="#00ff00"/><rect x="919" y="455" width="1" height="1" fill="#00ff00"/><rect x="926" y="455" width="1" height="1" fill="#00ff00"/><rect x="933" y="455" width="1" height="1" fill="#00ff00"/><rect x="940" y="455" width="1" height="1" fill="#00ff00"/><rect x="947" y="455" width="1" height="1" fill="#00ff00"/><rect x="954" y="455" width="1" height="1" fill="#00ff00"/><rect x="961" y="455" width="1" height="1" fill="#00ff00"/><rect x="968" y="455" width="1" height="1" fill="#00ff00"/><rect x="975" y="455" width="1" height="1" fill="#00ff00"/><rect x="981" y="455" width="1" height="1" fill="#00ff00"/><rect x="988" y="455" width="1" height="1" fill="#00ff00"/><rect x="995" y="455" width="1" height="1" fill="#00ff00"/><rect x="1002" y="455" width="1" height="1" fill="#00ff00"/><rect x="1009" y="455" width="1" height="1" fill="#00ff00"/><rect x="1016" y="455" width="1" height="1" fill="#00ff00"/><rect x="1023" y="455" width="1" height="1" fill="#00ff00"/><rect x="1030" y="455" width="1" height="1" fill="#00ff00"/><rect x="1037" y="455" width="1" height="1" fill="#00ff00"/><rect x="1043" y="455" width="1" height="1" fill="#00ff00"/><rect x="1050" y="455" width="1" height="1" fill="#00ff00"/>
<rect x="3" y="478" width="1" height="1" fill="#00ff00"/><rect x="10" y="478" width="1" height="1" fill="#00ff00"/><rect x="17" y="478" width="1" height="1" fill="#00ff00"/><rect x="24" y="478" width="1" height="1" fill="#00ff00"/><rect x="31" y="478" width="1" height="1" fill="#00ff00"/><rect x="37" y="478" width="1" height="1" fill="#00ff00"/><rect x="44" y="478" width="1" height="1" fill="#00ff00"/><rect x="51" y="478" width="1" height="1" fill="#00ff00"/><rect x="58" y="478" width="1" height="1" fill="#00ff00"/><rect x="65" y="478" width="1" height="1" fill="#00ff00"/><rect x="72" y="478" width="1" height="1" fill="#00ff00"/><rect x="79" y="478" width="1" height="1" fill="#00ff00"/><rect x="86" y="478" width="1" height="1" fill="#00ff00"/><rect x="93" y="478" width="1" height="1" fill="#00ff00"/><rect x="99" y="478" width="1" height="1" fill="#00ff00"/><rect x="106" y="478" width="1" height="1" fill="#00ff00"/><rect x="113" y="478" width="1" height="1" fill="#00ff00"/><rect x="120" y="478" width="1" height="1" fill="#00ff00"/><rect x="127" y="478" width="1" height="1" fill="#00ff00"/><rect x="134" y="478" width="1" height="1" fill="#00ff00"/><rect x="141" y="478" width="1" height="1" fill="#00ff00"/><rect x="148" y="478" width="1" height="1" fill="#00ff00"/><rect x="155" y="478" width="1" height="1" fill="#00ff00"/><rect x="161" y="478" width="1" height="1" fill="#00ff00"/><rect x="168" y="478" width="1" height="1" fill="#00ff00"/><rect x="175" y="478" width="1" height="1" fill="#00ff00"/><rect x="182" y="478" width="1" height="1" fill="#00ff00"/><rect x="189" y="478" width="1" height="1" fill="#00ff00"/><rect x="196" y="478" width="1" height="1" fill="#00ff00"/><rect x="203" y="478" width="1" height="1" fill="#00ff00"/><rect x="210" y="478" width="1" height="1" fill="#00ff00"/><rect x="217" y="478" width="1" height="1" fill="#00ff00"/><rect x="223" y="478" width="1" height="1" fill="#00ff00"/><rect x="230" y="478" width="1" height="1" fill="#00ff00"/><rect x="237" y="478" width="1" height="1" fill="#00ff00"/><rect x="244" y="478" width="1" height="1" fill="#00ff00"/><rect x="251" y="478" width="1" height="1" fill="#00ff00"/><rect x="258" y="478" width="1" height="1" fill="#00ff00"/><rect x="265" y="478" width="1" height="1" fill="#00ff00"/><rect x="272" y="478" width="1" height="1" fill="#00ff00"/><rect x="279" y="478" width="1" height="1" fill="#00ff00"/><rect x="285" y="478" width="1" height="1" fill="#00ff00"/><rect x="292" y="478" width="1" height="1" fill="#00ff00"/><rect x="299" y="478" width="1" height="1" fill="#00ff00"/><rect x="306" y="478" width="1" height="1" fill="#00ff00"/><rect x="313" y="478" width="1" height="1" fill="#00ff00"/><rect x="320" y="478" width="1" height="1" fill="#00ff00"/><rect x="327" y="478" width="1" height="1" fill="#00ff00"/><rect x="334" y="478" width="1" height="1" fill="#00ff00"/><rect x="341" y="478" width="1" height="1" fill="#00ff00"/><rect x="347" y="478" width="1" height="1" fill="#00ff00"/><rect x="354" y="478" width="1" height="1" fill="#00ff00"/><rect x="361" y="478" width="1" height="1" fill="#00ff00"/><rect x="368" y="478" width="1" height="1" fill="#00ff00"/><rect x="375" y="478" width="1" height="1" fill="#00ff00"/><rect x="382" y="478" width="1" height="1" fill="#00ff00"/><rect x="389" y="478" width="1" height="1" fill="#00ff00"/><rect x="396" y="478" width="1" height="1" fill="#00ff00"/><rect x="403" y="478" width="1" height="1" fill="#00ff00"/><rect x="410" y="478" width="1" height="1" fill="#00ff00"/><rect x="416" y="478" width="1" height="1" fill="#00ff00"/><rect x="423" y="478" width="1" height="1" fill="#00ff00"/><rect x="430" y="478" width="1" height="1" fill="#00ff00"/><rect x="437" y="478" width="1" height="1" fill="#00ff00"/><rect x="444" y="478" width="1" height="1" fill="#00ff00"/><rect x="451" y="478" width="1" height="1" fill="#00ff00"/><rect x="458" y="478" width="1" height="1" fill="#00ff00"/><rect x="465" y="478" width="1" height="1" fill="#00ff00"/><rect x="472" y="478" width="1" height="1" fill="#00ff00"/><rect x="478" y="478" width="1" height="1" fill="#00ff00"/><rect x="485" y="478" width="1" height="1" fill="#00ff00"/><rect x="492" y="478" width="1" height="1" fill="#00ff00"/><rect x="499" y="478" width="1" height="1" fill="#00ff00"/><rect x="506" y="478" width="1" height="1" fill="#00ff00"/><rect x="513" y="478" width="1" height="1" fill="#00ff00"/><rect x="520" y="478" width="1" height="1" fill="#00ff00"/><rect x="527" y="478" width="1" height="1" fill="#00ff00"/><rect x="534" y="478" width="1" height="1" fill="#00ff00"/><rect x="540" y="478" width="1" height="1" fill="#00ff00"/><rect x="547" y="478" width="1" height="1" fill="#00ff00"/><rect x="554" y="478" width="1" height="1" fill="#00ff00"/><rect x="561" y="478" width="1" height="1" fill="#00ff00"/><rect x="568" y="478" width="1" height="1" fill="#00ff00"/><rect x="575" y="478" width="1" height="1" fill="#00ff00"/><rect x="582" y="478" width="1" height="1" fill="#00ff00"/><rect x="589" y="478" width="1" height="1" fill="#00ff00"/><rect x="596" y="478" width="1" height="1" fill="#00ff00"/><rect x="602" y="478" width="1" height="1" fill="#00ff00"/><rect x="609" y="478" width="1" height="1" fill="#00ff00"/><rect x="616" y="478" width="1" height="1" fill="#00ff00"/><rect x="623" y="478" width="1" height="1" fill="#00ff00"/><rect x="630" y="478" width="1" height="1" fill="#00ff00"/><rect x="637" y="478" width="1" height="1" fill="#00ff00"/><rect x="644" y="478" width="1" height="1" fill="#00ff00"/><rect x="651" y="478" width="1" height="1" fill="#00ff00"/><rect x="658" y="478" width="1" height="1" fill="#00ff00"/><rect x="664" y="478" width="1" height="1" fill="#00ff00"/><rect x="671" y="478" width="1" height="1" fill="#00ff00"/><rect x="678" y="478" width="1" height="1" fill="#00ff00"/><rect x="685" y="478" width="1" height="1" fill="#00ff00"/><rect x="692" y="478" width="1" height="1" fill="#00ff00"/><rect x="699" y="478" width="1" height="1" fill="#00ff00"/><rect x="706" y="478" width="1" height="1" fill="#00ff00"/><rect x="713" y="478" width="1" height="1" fill="#00ff00"/><rect x="720" y="478" width="1" height="1" fill="#00ff00"/><rect x="727" y="478" width="1" height="1" fill="#00ff00"/><rect x="733" y="478" width="1" height="1" fill="#00ff00"/><rect x="740" y="478" width="1" height="1" fill="#00ff00"/><rect x="747" y="478" width="1" height="1" fill="#00ff00"/><rect x="754" y="478" width="1" height="1" fill="#00ff00"/><rect x="761" y="478" width="1" height="1" fill="#00ff00"/><rect x="768" y="478" width="1" height="1" fill="#00ff00"/><rect x="775" y="478" width="1" height="1" fill="#00ff00"/><rect x="782" y="478" width="1" height="1" fill="#00ff00"/><rect x="789" y="478" width="1" height="1" fill="#00ff00"/><rect x="795" y="478" width="1" height="1" fill="#00ff00"/><rect x="802" y="478" width="1" height="1" fill="#00ff00"/><rect x="809" y="478" width="1" height="1" fill="#00ff00"/><rect x="816" y="478" width="1" height="1" fill="#00ff00"/><rect x="823" y="478" width="1" height="1" fill="#00ff00"/><rect x="830" y="478" width="1" height="1" fill="#00ff00"/><rect x="837" y="478" width="1" height="1" fill="#00ff00"/><rect x="844" y="478" width="1" height="1" fill="#00ff00"/><rect x="851" y="478" width="1" height="1" fill="#00ff00"/><rect x="857" y="478" width="1" height="1" fill="#00ff00"/><rect x="864" y="478" width="1" height="1" fill="#00ff00"/><rect x="871" y="478" width="1" height="1" fill="#00ff00"/><rect x="878" y="478" width="1" height="1" fill="#00ff00"/><rect x="885" y="478" width="1" height="1" fill="#00ff00"/><rect x="892" y="478" width="1" height="1" fill="#00ff00"/><rect x="899" y="478" width="1" height="1" fill="#00ff00"/><rect x="906" y="478" width="1" height="1" fill="#00ff00"/><rect x="913" y="478" width="1" height="1" fill="#00ff00"/><rect x="919" y="478" width="1" height="1" fill="#00ff00"/><rect x="926" y="478" width="1" height="1" fill="#00ff00"/><rect x="933" y="478" width="1" height="1" fill="#00ff00"/><rect x="940" y="478" width="1" height="1" fill="#00ff00"/><rect x="947" y="478" width="1" height="1" fill="#00ff00"/><rect x="954" y="478" width="1" height="1" fill="#00ff00"/><rect x="961" y="478" width="1" height="1" fill="#00ff00"/><rect x="968" y="478" width="1" height="1" fill="#00ff00"/><rect x="975" y="478" width="1" height="1" fill="#00ff00"/><rect x="981" y="478" width="1" height="1" fill="#00ff00"/><rect x="988" y="478" width="1" height="1" fill="#00ff00"/><rect x="995" y="478" width="1" height="1" fill="#00ff00"/><rect x="1002" y="478" width="1" height="1" fill="#00ff00"/><rect x="1009" y="478" width="1" height="1" fill="#00ff00"/><rect x="1016" y="478" width="1" height="1" fill="#00ff00"/><rect x="1023" y="478" width="1" height="1" fill="#00ff00"/><rect x="1030" y="478" width="1" height="1" fill="#00ff00"/><rect x="1037" y="478" width="1" height="1" fill="#00ff00"/><rect x="1043" y="478" width="1" height="1" fill="#00ff00"/><rect x="1050" y="478" width="1" height="1" fill="#00ff00"/>
<rect x="3" y="569" width="1" height="1" fill="#00ff00"/><rect x="10" y="569" width="1" height="1" fill="#00ff00"/><rect x="17" y="569" width="1" height="1" fill="#00ff00"/><rect x="24" y="569" width="1" height="1" fill="#00ff00"/><rect x="31" y="569" width="1" height="1" fill="#00ff00"/><rect x="37" y="569" width="1" height="1" fill="#00ff00"/><rect x="44" y="569" width="1" height="1" fill="#00ff00"/><rect x="51" y="569" width="1" height="1" fill="#00ff00"/><rect x="58" y="569" width="1" height="1" fill="#00ff00"/><rect x="65" y="569" width="1" height="1" fill="#00ff00"/><rect x="72" y="569" width="1" height="1" fill="#00ff00"/><rect x="79" y="569" width="1" height="1" fill="#00ff00"/><rect x="86" y="569" width="1" height="1" fill="#00ff00"/><rect x="93" y="569" width="1" height="1" fill="#00ff00"/><rect x="99" y="569" width="1" height="1" fill="#00ff00"/><rect x="106" y="569" width="1" height="1" fill="#00ff00"/><rect x="113" y="569" width="1" height="1" fill="#00ff00"/><rect x="120" y="569" width="1" height="1" fill="#00ff00"/><rect x="127" y="569" width="1" height="1" fill="#00ff00"/><rect x="134" y="569" width="1" height="1" fill="#00ff00"/><rect x="141" y="569" width="1" height="1" fill="#00ff00"/><rect x="148" y="569" width="1" height="1" fill="#00ff00"/><rect x="155" y="569" width="1" height="1" fill="#00ff00"/><rect x="161" y="569" width="1" height="1" fill="#00ff00"/><rect x="168" y="569" width="1" height="1" fill="#00ff00"/><rect x="175" y="569" width="1" height="1" fill="#00ff00"/><rect x="182" y="569" width="1" height="1" fill="#00ff00"/><rect x="189" y="569" width="1" height="1" fill="#00ff00"/><rect x="196" y="569" width="1" height="1" fill="#00ff00"/><rect x="203" y="569" width="1" height="1" fill="#00ff00"/><rect x="210" y="569" width="1" height="1" fill="#00ff00"/><rect x="217" y="569" width="1" height="1" fill="#00ff00"/><rect x="223" y="569" width="1" height="1" fill="#00ff00"/><rect x="230" y="569" width="1" height="1" fill="#00ff00"/><rect x="237" y="569" width="1" height="1" fill="#00ff00"/><rect x="244" y="569" width="1" height="1" fill="#00ff00"/><rect x="251" y="569" width="1" height="1" fill="#00ff00"/><rect x="258" y="569" width="1" height="1" fill="#00ff00"/><rect x="265" y="569" width="1" height="1" fill="#00ff00"/><rect x="272" y="569" width="1" height="1" fill="#00ff00"/><rect x="279" y="569" width="1" height="1" fill="#00ff00"/><rect x="285" y="569" width="1" height="1" fill="#00ff00"/><rect x="292" y="569" width="1" height="1" fill="#00ff00"/><rect x="299" y="569" width="1" height="1" fill="#00ff00"/><rect x="306" y="569" width="1" height="1" fill="#00ff00"/><rect x="313" y="569" width="1" height="1" fill="#00ff00"/><rect x="320" y="569" width="1" height="1" fill="#00ff00"/><rect x="327" y="569" width="1" height="1" fill="#00ff00"/><rect x="334" y="569" width="1" height="1" fill="#00ff00"/><rect x="341" y="569" width="1" height="1" fill="#00ff00"/><rect x="347" y="569" width="1" height="1" fill="#00ff00"/><rect x="354" y="569" width="1" height="1" fill="#00ff00"/><rect x="361" y="569" width="1" height="1" fill="#00ff00"/><rect x="368" y="569" width="1" height="1" fill="#00ff00"/><rect x="375" y="569" width="1" height="1" fill="#00ff00"/><rect x="382" y="569" width="1" height="1" fill="#00ff00"/><rect x="389" y="569" width="1" height="1" fill="#00ff00"/><rect x="396" y="569" width="1" height="1" fill="#00ff00"/><rect x="403" y="569" width="1" height="1" fill="#00ff00"/><rect x="410" y="569" width="1" height="1" fill="#00ff00"/><rect x="416" y="569" width="1" height="1" fill="#00ff00"/><rect x="423" y="569" width="1" height="1" fill="#00ff00"/><rect x="430" y="569" width="1" height="1" fill="#00ff00"/><rect x="437" y="569" width="1" height="1" fill="#00ff00"/><rect x="444" y="569" width="1" height="1" fill="#00ff00"/><rect x="451" y="569" width="1" height="1" fill="#00ff00"/><rect x="458" y="569" width="1" height="1" fill="#00ff00"/><rect x="465" y="569" width="1" height="1" fill="#00ff00"/><rect x="472" y="569" width="1" height="1" fill="#00ff00"/><rect x="478" y="569" width="1" height="1" fill="#00ff00"/><rect x="485" y="569" width="1" height="1" fill="#00ff00"/><rect x="492" y="569" width="1" height="1" fill="#00ff00"/><rect x="499" y="569" width="1" height="1" fill="#00ff00"/><rect x="506" y="569" width="1" height="1" fill="#00ff00"/><rect x="513" y="569" width="1" height="1" fill="#00ff00"/><rect x="520" y="569" width="1" height="1" fill="#00ff00"/><rect x="527" y="569" width="1" height="1" fill="#00ff00"/><rect x="534" y="569" width="1" height="1" fill="#00ff00"/><rect x="540" y="569" width="1" height="1" fill="#00ff00"/><rect x="547" y="569" width="1" height="1" fill="#00ff00"/><rect x="554" y="569" width="1" height="1" fill="#00ff00"/><rect x="561" y="569" width="1" height="1" fill="#00ff00"/><rect x="568" y="569" width="1" height="1" fill="#00ff00"/><rect x="575" y="569" width="1" height="1" fill="#00ff00"/><rect x="582" y="569" width="1" height="1" fill="#00ff00"/><rect x="589" y="569" width="1" height="1" fill="#00ff00"/><rect x="596" y="569" width="1" height="1" fill="#00ff00"/><rect x="602" y="569" width="1" height="1" fill="#00ff00"/><rect x="609" y="569" width="1" height="1" fill="#00ff00"/><rect x="616" y="569" width="1" height="1" fill="#00ff00"/><rect x="623" y="569" width="1" height="1" fill="#00ff00"/><rect x="630" y="569" width="1" height="1" fill="#00ff00"/><rect x="637" y="569" width="1" height="1" fill="#00ff00"/><rect x="644" y="569" width="1" height="1" fill="#00ff00"/><rect x="651" y="569" width="1" height="1" fill="#00ff00"/><rect x="658" y="569" width="1" height="1" fill="#00ff00"/><rect x="664" y="569" width="1" height="1" fill="#00ff00"/><rect x="671" y="569" width="1" height="1" fill="#00ff00"/><rect x="678" y="569" width="1" height="1" fill="#00ff00"/><rect x="685" y="569" width="1" height="1" fill="#00ff00"/><rect x="692" y="569" width="1" height="1" fill="#00ff00"/><rect x="699" y="569" width="1" height="1" fill="#00ff00"/><rect x="706" y="569" width="1" height="1" fill="#00ff00"/><rect x="713" y="569" width="1" height="1" fill="#00ff00"/><rect x="720" y="569" width="1" height="1" fill="#00ff00"/><rect x="727" y="569" width="1" height="1" fill="#00ff00"/><rect x="733" y="569" width="1" height="1" fill="#00ff00"/><rect x="740" y="569" width="1" height="1" fill="#00ff00"/><rect x="747" y="569" width="1" height="1" fill="#00ff00"/><rect x="754" y="569" width="1" height="1" fill="#00ff00"/><rect x="761" y="569" width="1" height="1" fill="#00ff00"/><rect x="768" y="569" width="1" height="1" fill="#00ff00"/><rect x="775" y="569" width="1" height="1" fill="#00ff00"/><rect x="782" y="569" width="1" height="1" fill="#00ff00"/><rect x="789" y="569" width="1" height="1" fill="#00ff00"/><rect x="795" y="569" width="1" height="1" fill="#00ff00"/><rect x="802" y="569" width="1" height="1" fill="#00ff00"/><rect x="809" y="569" width="1" height="1" fill="#00ff00"/><rect x="816" y="569" width="1" height="1" fill="#00ff00"/><rect x="823" y="569" width="1" height="1" fill="#00ff00"/><rect x="830" y="569" width="1" height="1" fill="#00ff00"/><rect x="837" y="569" width="1" height="1" fill="#00ff00"/><rect x="844" y="569" width="1" height="1" fill="#00ff00"/><rect x="851" y="569" width="1" height="1" fill="#00ff00"/><rect x="857" y="569" width="1" height="1" fill="#00ff00"/><rect x="864" y="569" width="1" height="1" fill="#00ff00"/><rect x="871" y="569" width="1" height="1" fill="#00ff00"/><rect x="878" y="569" width="1" height="1" fill="#00ff00"/><rect x="885" y="569" width="1" height="1" fill="#00ff00"/><rect x="892" y="569" width="1" height="1" fill="#00ff00"/><rect x="899" y="569" width="1" height="1" fill="#00ff00"/><rect x="906" y="569" width="1" height="1" fill="#00ff00"/><rect x="913" y="569" width="1" height="1" fill="#00ff00"/><rect x="919" y="569" width="1" height="1" fill="#00ff00"/><rect x="926" y="569" width="1" height="1" fill="#00ff00"/><rect x="933" y="569" width="1" height="1" fill="#00ff00"/><rect x="940" y="569" width="1" height="1" fill="#00ff00"/><rect x="947" y="569" width="1" height="1" fill="#00ff00"/><rect x="954" y="569" width="1" height="1" fill="#00ff00"/><rect x="961" y="569" width="1" height="1" fill="#00ff00"/><rect x="968" y="569" width="1" height="1" fill="#00ff00"/><rect x="975" y="569" width="1" height="1" fill="#00ff00"/><rect x="981" y="569" width="1" height="1" fill="#00ff00"/><rect x="988" y="569" width="1" height="1" fill="#00ff00"/><rect x="995" y="569" width="1" height="1" fill="#00ff00"/><rect x="1002" y="569" width="1" height="1" fill="#00ff00"/><rect x="1009" y="569" width="1" height="1" fill="#00ff00"/><rect x="1016" y="569" width="1" height="1" fill="#00ff00"/><rect x="1023" y="569" width="1" height="1" fill="#00ff00"/><rect x="1030" y="569" width="1" height="1" fill="#00ff00"/><rect x="1037" y="569" width="1" height="1" fill="#00ff00"/><rect x="1043" y="569" width="1" height="1" fill="#00ff00"/><rect x="1050" y="569" width="1" height="1" fill="#00ff00"/>
<polyline points="3.5,479.5 10.5,480.5 17.5,475.5 24.5,471.5 31.5,463.5 37.5,455.5 44.5,452.5 51.5,456.5 58.5,462.5 65.5,468.5 72.5,466.5 79.5,461.5 86.5,473.5 93.5,497.5 99.5,518.5 106.5,525.5 113.5,533.5 120.5,544.5 127.5,557.5 134.5,562.5 141.5,558.5 148.5,554.5 155.5,549.5 161.5,548.5 168.5,545.5 175.5,543.5 182.5,541.5 189.5,540.5 196.5,545.5 203.5,553.5 210.5,563.5 217.5,578.5 223.5,590.5 230.5,596.5 237.5,602.5 244.5,603.5 251.5,599.5 258.5,595.5 265.5,575.5 272.5,560.5 279.5,545.5 285.5,535.5 292.5,530.5 299.5,533.5 306.5,533.5 313.5,526.5 320.5,518.5 327.5,516.5 334.5,520.5 341.5,523.5 347.5,529.5 354.5,548.5 361.5,570.5 368.5,571.5 375.5,565.5 382.5,579.5 389.5,589.5 396.5,590.5 403.5,587.5 410.5,579.5 416.5,570.5 423.5,560.5 430.5,552.5 437.5,535.5 444.5,525.5 451.5,523.5 458.5,531.5 465.5,544.5 472.5,576.5 478.5,595.5 485.5,597.5 492.5,591.5 499.5,581.5 506.5,569.5 513.5,562.5 520.5,560.5 527.5,550.5 534.5,545.5 540.5,550.5 547.5,553.5 554.5,557.5 561.5,567.5 568.5,580.5 575.5,593.5 582.5,601.5 589.5,608.5 596.5,610.5 602.5,603.5 609.5,590.5 616.5,575.5 623.5,565.5 630.5,557.5 637.5,549.5 644.5,543.5 651.5,541.5 658.5,540.5 664.5,541.5 671.5,533.5 678.5,524.5 685.5,515.5 692.5,504.5 699.5,491.5 706.5,471.5 713.5,447.5 720.5,434.5 727.5,427.5 733.5,427.5 740.5,432.5 747.5,439.5 754.5,446.5 761.5,448.5 768.5,450.5 775.5,449.5 782.5,450.5 789.5,453.5 795.5,460.5 802.5,468.5 809.5,478.5 816.5,484.5 823.5,483.5 830.5,482.5 837.5,480.5 844.5,472.5 851.5,463.5 857.5,458.5 864.5,466.5 871.5,484.5 878.5,496.5 885.5,501.5 892.5,512.5 899.5,529.5 906.5,559.5 913.5,583.5 919.5,599.5 926.5,612.5 933.5,602.5 940.5,581.5 947.5,562.5 954.5,547.5 961.5,541.5 968.5,539.5 975.5,536.5 981.5,535.5 988.5,533.5 995.5,538.5 1002.5,554.5 1009.5,580.5 1016.5,593.5 1023.5,590.5 1030.5,552.5 1037.5,509.5 1043.5,474.5 1050.5,458.5" fill="none" stroke="#ffffff" stroke-width="1"/>
<polyline points="3.5,473.5 10.5,478.5 17.5,476.5 24.5,473.5 31.5,466.5 37.5,459.5 44.5,454.5 51.5,455.5 58.5,460.5 65.5,465.5 72.5,466.5 79.5,462.5 86.5,469.5 93.5,488.5 99.5,507.5 106.5,520.5 113.5,529.5 120.5,540.5 127.5,551.5 134.5,558.5 141.5,559.5 148.5,555.5 155.5,552.5 161.5,550.5 168.5,546.5 175.5,544.5 182.5,542.5 189.5,541.5 196.5,544.5 203.5,549.5 210.5,558.5 217.5,571.5 223.5,585.5 230.5,592.5 237.5,598.5 244.5,601.5 251.5,600.5 258.5,597.5 265.5,583.5 272.5,569.5 279.5,553.5 285.5,541.5 292.5,533.5 299.5,533.5 306.5,533.5 313.5,528.5 320.5,522.5 327.5,518.5 334.5,519.5 341.5,522.5 347.5,527.5 354.5,542.5 361.5,560.5 368.5,567.5 375.5,566.5 382.5,575.5 389.5,584.5 396.5,588.5 403.5,587.5 410.5,582.5 416.5,575.5 423.5,566.5 430.5,558.5 437.5,542.5 444.5,530.5 451.5,525.5 458.5,529.5 465.5,541.5 472.5,566.5 478.5,584.5 485.5,593.5 492.5,593.5 499.5,585.5 506.5,574.5 513.5,566.5 520.5,562.5 527.5,554.5 534.5,547.5 540.5,549.5 547.5,551.5 554.5,555.5 561.5,563.5 568.5,575.5 575.5,588.5 582.5,597.5 589.5,604.5 596.5,607.5 602.5,604.5 609.5,594.5 616.5,581.5 623.5,570.5 630.5,561.5 637.5,553.5 644.5,546.5 651.5,543.5 658.5,541.5 664.5,541.5 671.5,536.5 678.5,528.5 685.5,519.5 692.5,509.5 699.5,497.5 706.5,479.5 713.5,457.5 720.5,441.5 727.5,432.5 733.5,429.5 740.5,431.5 747.5,436.5 754.5,443.5 761.5,446.5 768.5,449.5 775.5,449.5 782.5,449.5 789.5,451.5 795.5,457.5 802.5,465.5 809.5,474.5 816.5,481.5 823.5,482.5 830.5,482.5 837.5,480.5 844.5,475.5 851.5,467.5 857.5,461.5 864.5,465.5 871.5,477.5 878.5,490.5 885.5,497.5 892.5,507.5 899.5,522.5 906.5,546.5 913.5,569.5 919.5,588.5 926.5,606.5 933.5,604.5 940.5,585.5 947.5,569.5 954.5,555.5 961.5,546.5 968.5,541.5 975.5,538.5 981.5,536.5 988.5,534.5 995.5,536.5 1002.5,548.5 1009.5,569.5 1016.5,585.5 1023.5,587.5 1030.5,564.5 1037.5,528.5 1043.5,492.5 1050.5,470.5" fill="none" stroke="#ffff00" stroke-width="1"/>
<polyline points="3.5,490.5 10.5,486.5 17.5,474.5 24.5,467.5 31.5,457.5 37.5,447.5 44.5,446.5 51.5,456.5 58.5,466.5 65.5,474.5 72.5,466.5 79.5,457.5 86.5,480.5 93.5,516.5 99.5,539.5 106.5,536.5 113.5,541.5 120.5,552.5 127.5,569.5 134.5,570.5 141.5,558.5 148.5,551.5 155.5,544.5 161.5,546.5 168.5,542.5 175.5,540.5 182.5,539.5 189.5,538.5 196.5,549.5 203.5,561.5 210.5,574.5 217.5,591.5 223.5,601.5 230.5,605.5 237.5,609.5 244.5,606.5 251.5,598.5 258.5,591.5 265.5,560.5 272.5,543.5 279.5,530.5 285.5,523.5 292.5,523.5 299.5,533.5 306.5,534.5 313.5,521.5 320.5,511.5 327.5,511.5 334.5,521.5 341.5,526.5 347.5,534.5 354.5,561.5 361.5,589.5 368.5,580.5 375.5,564.5 382.5,587.5 389.5,599.5 396.5,593.5 403.5,586.5 410.5,572.5 416.5,560.5 423.5,548.5 430.5,540.5 437.5,520.5 444.5,514.5 451.5,519.5 458.5,535.5 465.5,550.5 472.5,597.5 478.5,618.5 485.5,606.5 492.5,589.5 499.5,572.5 506.5,559.5 513.5,555.5 520.5,555.5 527.5,541.5 534.5,539.5 540.5,551.5 547.5,555.5 554.5,561.5 561.5,574.5 568.5,589.5 575.5,603.5 582.5,609.5 589.5,615.5 596.5,615.5 602.5,602.5 609.5,581.5 616.5,564.5 623.5,555.5 630.5,550.5 637.5,540.5 644.5,536.5 651.5,537.5 658.5,539.5 664.5,541.5 671.5,528.5 678.5,516.5 685.5,506.5 692.5,495.5 699.5,479.5 706.5,454.5 713.5,428.5 720.5,419.5 727.5,418.5 733.5,422.5 740.5,433.5 747.5,444.5 754.5,451.5 761.5,452.5 768.5,452.5 775.5,448.5 782.5,450.5 789.5,455.5 795.5,466.5 802.5,475.5 809.5,487.5 816.5,491.5 823.5,484.5 830.5,482.5 837.5,479.5 844.5,467.5 851.5,454.5 857.5,451.5 864.5,468.5 871.5,497.5 878.5,510.5 885.5,509.5 892.5,522.5 899.5,545.5 906.5,584.5 913.5,611.5 919.5,622.5 926.5,625.5 933.5,598.5 940.5,574.5 947.5,547.5 954.5,532.5 961.5,531.5 968.5,534.5 975.5,532.5 981.5,534.5 988.5,530.5 995.5,540.5 1002.5,567.5 1009.5,601.5 1016.5,609.5 1023.5,595.5 1030.5,530.5 1037.5,470.5 1043.5,439.5 1050.5,434.5" fill="none" stroke="#ff00ff" stroke-width="1"/>
<polyline points="3.5,546.5 10.5,546.5 17.5,503.5 24.5,546.5 31.5,546.5 37.5,546.5 44.5,546.5 51.5,546.5 58.5,546.5 65.5,546.5 72.5,546.5 79.5,503.5 86.5,546.5 93.5,546.5 99.5,546.5 106.5,546.5 113.5,546.5 120.5,546.5 127.5,546.5 134.5,546.5 141.5,503.5 148.5,546.5 155.5,546.5 161.5,546.5 168.5,546.5 175.5,546.5 182.5,546.5 189.5,546.5 196.5,546.5 203.5,546.5 210.5,546.5 217.5,546.5 223.5,546.5 230.5,546.5 237.5,546.5 244.5,546.5 251.5,503.5 258.5,546.5 265.5,546.5 272.5,546.5 279.5,546.5 285.5,546.5 292.5,546.5 299.5,546.5 306.5,546.5 313.5,503.5 320.5,546.5 327.5,546.5 334.5,546.5 341.5,546.5 347.5,546.5 354.5,546.5 361.5,546.5 368.5,546.5 375.5,503.5 382.5,546.5 389.5,546.5 396.5,546.5 403.5,503.5 410.5,546.5 416.5,546.5 423.5,546.5 430.5,546.5 437.5,546.5 444.5,546.5 451.5,546.5 458.5,546.5 465.5,546.5 472.5,546.5 478.5,546.5 485.5,546.5 492.5,503.5 499.5,546.5 506.5,546.5 513.5,546.5 520.5,546.5 527.5,546.5 534.5,546.5 540.5,546.5 547.5,546.5 554.5,546.5 561.5,546.5 568.5,546.5 575.5,546.5 582.5,546.5 589.5,546.5 596.5,546.5 602.5,503.5 609.5,546.5 616.5,546.5 623.5,546.5 630.5,546.5 637.5,546.5 644.5,546.5 651.5,546.5 658.5,546.5 664.5,546.5 671.5,546.5 678.5,546.5 685.5,546.5 692.5,546.5 699.5,546.5 706.5,546.5 713.5,546.5 720.5,546.5 727.5,546.5 733.5,546.5 740.5,546.5 747.5,546.5 754.5,546.5 761.5,546.5 768.5,546.5 775.5,503.5 782.5,546.5 789.5,546.5 795.5,546.5 802.5,546.5 809.5,546.5 816.5,546.5 823.5,546.5 830.5,503.5 837.5,546.5 844.5,546.5 851.5,546.5 857.5,546.5 864.5,546.5 871.5,546.5 878.5,546.5 885.5,546.5 892.5,546.5 899.5,546.5 906.5,546.5 913.5,546.5 919.5,546.5 926.5,546.5 933.5,503.5 940.5,546.5 947.5,546.5 954.5,546.5 961.5,546.5 968.5,546.5 975.5,546.5 981.5,546.5 988.5,546.5 995.5,546.5 1002.5,546.5 1009.5,546.5 1016.5,546.5 1023.5,546.5 1030.5,503.5 1037.5,546.5 1043.5,546.5 1050.5,546.5" fill="none" stroke="#00ff00" stroke-width="1"/>
<polyline points="3.5,546.5 10.5,546.5 17.5,546.5 24.5,546.5 31.5,546.5 37.5,546.5 44.5,546.5 51.5,503.5 58.5,546.5 65.5,546.5 72.5,546.5 79.5,546.5 86.5,503.5 93.5,546.5 99.5,546.5 106.5,546.5 113.5,546.5 120.5,546.5 127.5,546.5 134.5,546.5 141.5,546.5 148.5,546.5 155.5,546.5 161.5,546.5 168.5,546.5 175.5,546.5 182.5,546.5 189.5,546.5 196.5,503.5 203.5,546.5 210.5,546.5 217.5,546.5 223.5,546.5 230.5,546.5 237.5,546.5 244.5,546.5 251.5,546.5 258.5,546.5 265.5,546.5 272.5,546.5 279.5,546.5 285.5,546.5 292.5,546.5 299.5,546.5 306.5,503.5 313.5,546.5 320.5,546.5 327.5,546.5 334.5,503.5 341.5,546.5 347.5,546.5 354.5,546.5 361.5,546.5 368.5,546.5 375.5,546.5 382.5,503.5 389.5,546.5 396.5,546.5 403.5,546.5 410.5,546.5 416.5,546.5 423.5,546.5 430.5,546.5 437.5,546.5 444.5,546.5 451.5,546.5 458.5,503.5 465.5,546.5 472.5,546.5 478.5,546.5 485.5,546.5 492.5,546.5 499.5,546.5 506.5,546.5 513.5,546.5 520.5,546.5 527.5,546.5 534.5,546.5 540.5,503.5 547.5,546.5 554.5,546.5 561.5,546.5 568.5,546.5 575.5,546.5 582.5,546.5 589.5,546.5 596.5,546.5 602.5,546.5 609.5,546.5 616.5,546.5 623.5,546.5 630.5,546.5 637.5,546.5 644.5,546.5 651.5,546.5 658.5,546.5 664.5,546.5 671.5,546.5 678.5,546.5 685.5,546.5 692.5,546.5 699.5,546.5 706.5,546.5 713.5,546.5 720.5,546.5 727.5,546.5 733.5,546.5 740.5,503.5 747.5,546.5 754.5,546.5 761.5,546.5 768.5,546.5 775.5,546.5 782.5,503.5 789.5,546.5 795.5,546.5 802.5,546.5 809.5,546.5 816.5,546.5 823.5,546.5 830.5,546.5 837.5,546.5 844.5,546.5 851.5,546.5 857.5,546.5 864.5,503.5 871.5,546.5 878.5,546.5 885.5,546.5 892.5,546.5 899.5,546.5 906.5,546.5 913.5,546.5 919.5,546.5 926.5,546.5 933.5,546.5 940.5,546.5 947.5,546.5 954.5,546.5 961.5,546.5 968.5,546.5 975.5,546.5 981.5,546.5 988.5,546.5 995.5,503.5 1002.5,546.5 1009.5,546.5 1016.5,546.5 1023.5,546.5 1030.5,546.5 1037.5,546.5 1043.5,546.5 1050.5,546.5" fill="none" stroke="#c8c8c8" stroke-width="1"/>
</svg>
<div class="t" style="left:28px;top:1px;color:#fff;">分时</div>
<div class="t" style="left:61px;top:1px;color:#fff;"><span class="ns">1</span>分钟</div>
<div class="t" style="left:100px;top:1px;color:#fff;"><span class="ns">5</span>分钟</div>
<div class="t" style="left:139px;top:1px;color:#fff;"><span class="ns">15</span>分钟</div>
<div class="t" style="left:185px;top:1px;color:#fff;"><span class="ns">30</span>分钟</div>
<div class="t" style="left:231px;top:1px;color:#fff;"><span class="ns">60</span>分钟</div>
<div class="t" style="left:278px;top:1px;color:#00e5ff;">日线</div>
<div class="t" style="left:312px;top:1px;color:#fff;">周线</div>
<div class="t" style="left:346px;top:1px;color:#fff;">月线</div>
<div class="t" style="left:378px;top:1px;color:#fff;">多周期</div>
<div class="t" style="left:423px;top:1px;color:#fff;">更多</div>
<div class="t" style="left:816px;top:1px;color:#fff;">复权</div>
<div class="t" style="left:850px;top:1px;color:#fff;">叠加</div>
<div class="t" style="left:885px;top:1px;color:#fff;">多股</div>
<div class="t" style="left:920px;top:1px;color:#fff;">统计</div>
<div class="t" style="left:955px;top:1px;color:#fff;">画线</div>
<div class="t ns" style="left:992px;top:1px;color:#fff;">F10</div>
<div class="t" style="left:1025px;top:1px;color:#fff;">标记</div>
<div class="t" style="left:1057px;top:1px;color:#fff;"><span class="ns">+</span>自选</div>
<div class="t" style="left:1096px;top:1px;color:#fff;">返回</div>
<div class="t" style="left:2px;top:21px;color:#f4f4f4;">海森药业<span class="ns">(</span>日线<span class="ns">.</span>前复权<span class="ns">)</span></div>
<div class="t ns" style="left:1090px;top:54px;color:#c80000;width:30px;text-align:right;">27.00</div>
<div class="t ns" style="left:1090px;top:99px;color:#c80000;width:30px;text-align:right;">26.00</div>
<div class="t ns" style="left:1090px;top:144px;color:#c80000;width:30px;text-align:right;">25.00</div>
<div class="t ns" style="left:1090px;top:188px;color:#c80000;width:30px;text-align:right;">24.00</div>
<div class="t ns" style="left:1090px;top:233px;color:#c80000;width:30px;text-align:right;">23.00</div>
<div class="t ns" style="left:1090px;top:278px;color:#c80000;width:30px;text-align:right;">22.00</div>
<div class="t ns" style="left:1090px;top:322px;color:#c80000;width:30px;text-align:right;">21.00</div>
<div class="t ns" style="left:1090px;top:367px;color:#c80000;width:30px;text-align:right;">20.00</div>
<div class="t" style="left:18px;top:399px;color:#fff;">股朋指标网</div>
<div class="t ns" style="left:83px;top:399px;color:#fff;">AK: 98.14</div>
<div class="t ns" style="left:140px;top:399px;color:#ffff00;">AD: 87.66</div>
<div class="t ns" style="left:198px;top:399px;color:#ff00ff;">AJ: 119.09</div>
<div class="t ns" style="left:260px;top:399px;color:#00e600;">: 100.00</div>
<div class="t ns" style="left:310px;top:399px;color:#00e600;">: 0.00</div>
<div class="t ns" style="left:345px;top:399px;color:#00e600;">: 80.00</div>
<div class="t" style="left:386px;top:399px;color:#00e600;">买进<span class="ns">: 20.00</span></div>
<div class="t" style="left:452px;top:399px;color:#c0c0c0;">卖出<span class="ns">: 20.00</span></div>
<div class="t ns" style="left:1090px;top:448px;color:#c80000;width:30px;text-align:right;">100.0</div>
<div class="t ns" style="left:1090px;top:478px;color:#c80000;width:30px;text-align:right;">75.00</div>
<div class="t ns" style="left:1090px;top:505px;color:#c80000;width:30px;text-align:right;">50.00</div>
<div class="t ns" style="left:1090px;top:535px;color:#c80000;width:30px;text-align:right;">25.00</div>
<div class="t ns" style="left:1090px;top:562px;color:#c80000;width:30px;text-align:right;">0.00</div>
<div class="t" style="left:3.6px;top:631px;color:#c80000;"><span class="ns">2025</span>年</div>
<div class="t ns" style="left:106.4px;top:631px;color:#c80000;">9</div>
<div class="t ns" style="left:258.4px;top:631px;color:#c80000;">10</div>
<div class="t ns" style="left:375.4px;top:631px;color:#c80000;">11</div>
<div class="t ns" style="left:513.4px;top:631px;color:#c80000;">12</div>
<div class="t ns" style="left:671.4px;top:631px;color:#c80000;">1</div>
<div class="t ns" style="left:809.4px;top:631px;color:#c80000;">2</div>
<div class="t ns" style="left:906.4px;top:631px;color:#c80000;">3</div>
<div id="datebox">2026/01/15/四</div>
<div id="pricebox">22.28</div>
<div id="wm"><div class="a">股朋指标网</div><div class="b">www.7gpzb.com</div></div>
</body></html>
